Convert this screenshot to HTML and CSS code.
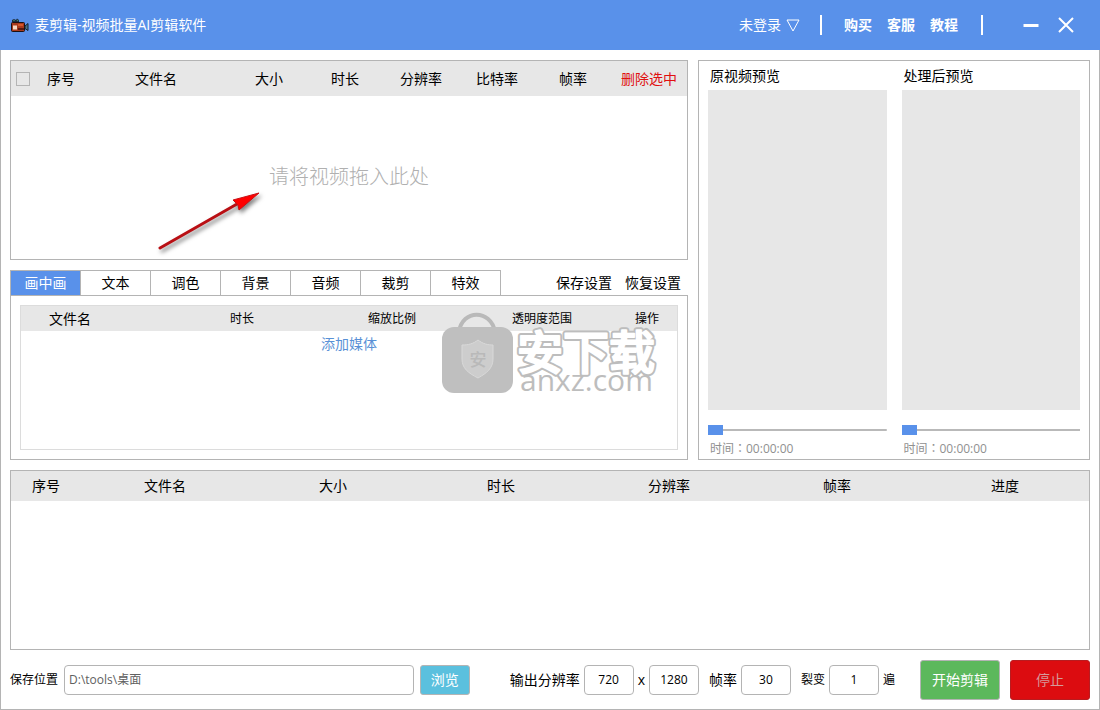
FILE: index.html
```html
<!DOCTYPE html>
<html lang="zh-CN">
<head>
<meta charset="utf-8">
<meta name="viewport" content="width=device-width, initial-scale=1">
<title>麦剪辑-视频批量AI剪辑软件</title>
<link rel="stylesheet" href="styles.css">
</head>
<body>
<div class="window">
  <header class="titlebar">
    <svg class="logo" viewBox="0 0 18 15" aria-hidden="true">
      <path d="M1 4 L1 2 L3 1 L5 2 L6 0.500 L8 2 L8 4z" fill="#1c2a3c"/>
      <circle cx="3" cy="2.500" r="0.800" fill="#3f8a70"/><circle cx="6.500" cy="2.500" r="0.800" fill="#3f8a70"/>
      <rect x="0.500" y="4.500" width="13" height="9" rx="1" fill="#a83a1c" stroke="#1d1010"/>
      <rect x="2" y="7.500" width="4" height="4" fill="#f7d9c4"/>
      <path d="M7 6h5v2H7z" fill="#d4572c"/><path d="M7 10h6v2H7z" fill="#5c1a10"/>
      <path d="M14 8 L17 5.500 V12.500 L14 10.500z" fill="#47758a" stroke="#15222e"/>
    </svg>
    <h1 class="app-name">麦剪辑-视频批量AI剪辑软件</h1>
    <button class="bar-button account" type="button">未登录
      <svg class="caret" viewBox="0 0 14 13" aria-hidden="true"><path d="M1 1 H13 L7 12z"/></svg>
    </button>
    <span class="divider"></span>
    <nav class="bar-links">
      <a href="#buy">购买</a>
      <a href="#service">客服</a>
      <a href="#tutorial">教程</a>
    </nav>
    <span class="divider"></span>
    <div class="window-controls">
      <button class="bar-button" type="button" aria-label="最小化"><svg viewBox="0 0 16 16" aria-hidden="true"><path class="thick" d="M0.500 8.500H15.500"/></svg></button>
      <button class="bar-button" type="button" aria-label="关闭"><svg viewBox="0 0 16 16" aria-hidden="true"><path d="M1 1 L15 15 M15 1 L1 15"/></svg></button>
    </div>
  </header>

  <main class="content">
    <div class="workspace">
      <div class="editor">
        <section class="panel files">
          <table class="grid-table file-table">
            <colgroup><col class="w-30"><col class="w-40"><col class="w-150"><col class="w-76"><col class="w-76"><col class="w-76"><col class="w-76"><col class="w-76"><col class="w-76"></colgroup>
            <thead>
              <tr>
                <th class="check-cell"><input class="check" type="checkbox" aria-label="全选"></th>
                <th>序号</th><th>文件名</th><th>大小</th><th>时长</th><th>分辨率</th><th>比特率</th><th>帧率</th>
                <th><button class="text-button danger" type="button">删除选中</button></th>
              </tr>
            </thead>
          </table>
          <div class="dropzone">
            <p class="drop-hint">请将视频拖入此处</p>
            <svg class="arrow" viewBox="0 0 110 66" aria-hidden="true">
              <path d="M4 59 L81 15" stroke="#b90f14" stroke-width="3" stroke-linecap="round"/>
              <path d="M103 4 L83 21 L82 16 L77 11z" fill="#f00" stroke="#c90f14" stroke-width="1"/>
            </svg>
          </div>
        </section>

        <section class="settings">
          <div class="tab-row">
            <div class="tabs" role="tablist">
              <button class="tab active" type="button" role="tab" aria-selected="true">画中画</button>
              <button class="tab" type="button" role="tab">文本</button>
              <button class="tab" type="button" role="tab">调色</button>
              <button class="tab" type="button" role="tab">背景</button>
              <button class="tab" type="button" role="tab">音频</button>
              <button class="tab" type="button" role="tab">裁剪</button>
              <button class="tab" type="button" role="tab">特效</button>
            </div>
            <div class="tab-actions">
              <button class="text-button" type="button">保存设置</button>
              <button class="text-button" type="button">恢复设置</button>
            </div>
          </div>
          <div class="panel tab-panel" role="tabpanel">
            <div class="media">
              <table class="grid-table media-table">
                <colgroup><col class="w-146"><col class="w-150"><col class="w-150"><col class="w-150"><col class="w-60"></colgroup>
                <thead><tr><th class="name-cell">文件名</th><th>时长</th><th>缩放比例</th><th>透明度范围</th><th>操作</th></tr></thead>
              </table>
              <button class="text-button add-media" type="button">添加媒体</button>
            </div>
            <svg class="watermark" viewBox="0 0 218 96" aria-hidden="true">
              <defs><text id="mark" x="77" y="57" class="mark-cn">安下载</text></defs>
              <path d="M19 20 C22 -3 51 -3 55 20" fill="none" stroke="#b9b9b9" stroke-width="4"/>
              <rect x="2" y="15" width="71" height="66" rx="12" fill="#bfbfbf"/>
              <path d="M38 28 C43 32 48 33 53 33 V47 C53 56 47 61 38 66 C28 61 22 56 22 47 V33 C28 33 33 32 38 28z" fill="#cdcdcd" stroke="#d9d9d9"/>
              <text x="38" y="54" class="mark-badge">安</text>
              <use href="#mark" class="mark-outer"/>
              <use href="#mark" class="mark-inner"/>
              <text x="80" y="79" class="mark-url">anxz.com</text>
            </svg>
          </div>
        </section>
      </div>

      <section class="panel previews">
        <div class="preview">
          <h2 class="preview-title">原视频预览</h2>
          <div class="screen"></div>
          <input class="seek" type="range" min="0" max="100" value="0" aria-label="原视频进度">
          <p class="time" lang="zh-TW">时间：00:00:00</p>
        </div>
        <div class="preview">
          <h2 class="preview-title">处理后预览</h2>
          <div class="screen"></div>
          <input class="seek" type="range" min="0" max="100" value="0" aria-label="处理后进度">
          <p class="time" lang="zh-TW">时间：00:00:00</p>
        </div>
      </section>
    </div>

    <section class="panel tasks">
      <table class="grid-table task-table">
        <colgroup><col class="w-70"><col class="w-168"><col class="w-168"><col class="w-168"><col class="w-168"><col class="w-168"><col class="w-168"></colgroup>
        <thead><tr><th>序号</th><th>文件名</th><th>大小</th><th>时长</th><th>分辨率</th><th>帧率</th><th>进度</th></tr></thead>
      </table>
    </section>

    <form class="footer">
      <div class="path-group">
        <label class="small" for="path">保存位置</label>
        <input class="field path" id="path" type="text" value="D:\tools\桌面">
        <button class="btn browse" type="button">浏览</button>
      </div>
      <div class="options">
        <div class="option">
          <label for="width">输出分辨率</label>
          <input class="field num" id="width" type="text" value="720">
          <label for="height">x</label>
          <input class="field num" id="height" type="text" value="1280">
        </div>
        <div class="option">
          <label for="fps">帧率</label>
          <input class="field num" id="fps" type="text" value="30">
        </div>
        <div class="option">
          <label class="small" for="times">裂变</label>
          <input class="field num" id="times" type="text" value="1">
          <span class="small">遍</span>
        </div>
      </div>
      <div class="actions">
        <button class="btn start" type="button">开始剪辑</button>
        <button class="btn stop" type="button">停止</button>
      </div>
    </form>
  </main>
</div>
</body>
</html>
```

FILE: styles.css
```css
* { box-sizing: border-box; }

body {
  margin: 0;
  background: #fff;
  color: #000;
  font: 14px/20px "Open Sans", "Noto Sans CJK SC", sans-serif;
}

h1, h2, p { margin: 0; font-weight: 400; }

button, input { font: inherit; color: inherit; }

button { padding: 0; border: 0; background: none; cursor: pointer; white-space: nowrap; }

.window { display: flex; flex-direction: column; min-height: 100vh; }

/* Title bar */
.titlebar {
  display: flex;
  align-items: center;
  height: 50px;
  padding: 0 26px 0 11px;
  background: #5991ea;
  color: #fff;
}
.logo { width: 18px; height: 15px; margin-right: 6px; }
.app-name { flex: 1; font-size: 14px; }
.account { display: flex; align-items: center; gap: 5px; }
.caret { width: 14px; height: 13px; fill: none; stroke: #fff; }
.divider { width: 2px; height: 20px; background: #fff; margin: 0 22px 0 20px; }
.bar-links { display: flex; gap: 15px; }
.bar-links a { color: #fff; font-weight: 700; text-decoration: none; }
.bar-links + .divider { margin: 0 40px 0 23px; }
.window-controls { display: flex; gap: 19px; }
.window-controls .bar-button { display: flex; }
.window-controls svg { width: 16px; height: 16px; fill: none; stroke: #fff; stroke-width: 2; }
.window-controls .thick { stroke-width: 3; }

/* Page frame */
.content {
  flex: 1;
  display: flex;
  flex-direction: column;
  gap: 10px;
  padding: 10px 9px 9px;
  border: 1px solid #b4b4b4;
  border-top: 0;
}
.workspace { display: grid; grid-template-columns: minmax(0, 678fr) minmax(0, 392fr); gap: 10px; }
.editor { display: flex; flex-direction: column; gap: 10px; }
.panel { border: 1px solid #b4b4b4; background: #fff; }

/* Tables */
.grid-table { width: 100%; table-layout: fixed; border-collapse: collapse; }
.grid-table th { padding: 0; background: #e7e7e7; font-weight: 400; text-align: center; white-space: nowrap; }
.file-table th { height: 35px; }
.media-table th { height: 25px; font-size: 12px; }
.task-table th { height: 30px; }
.w-30 { width: 30px; }
.w-40 { width: 40px; }
.w-60 { width: 60px; }
.w-70 { width: 70px; }
.w-76 { width: 76px; }
.w-146 { width: 146px; }
.w-150 { width: 150px; }
.w-168 { width: 168px; }
.grid-table .check-cell { padding-left: 5px; text-align: left; }
.media-table .name-cell { padding-left: 28px; font-size: 14px; text-align: left; }
.check {
  display: block;
  appearance: none;
  width: 14px;
  height: 14px;
  margin: 0;
  border: 1px solid #b4b4b4;
}
.check:checked { background: #5991ea; }
.danger { color: #e01010; }

/* Drop area */
.files { display: flex; flex-direction: column; min-height: 200px; }
.dropzone { position: relative; flex: 1; display: grid; place-items: center; padding-bottom: 2px; }
.drop-hint { color: #b0b0b0; font-size: 20px; line-height: 28px; font-weight: 300; }
.arrow {
  position: absolute;
  left: 145px;
  top: 93px;
  width: 110px;
  height: 66px;
  fill: none;
  filter: drop-shadow(2px 3px 2px rgba(0, 0, 0, 0.5));
}

/* Settings tabs */
.tab-row { display: flex; justify-content: space-between; }
.tabs { display: flex; border: 1px solid #b4b4b4; border-width: 1px 0 0 1px; }
.tab { width: 70px; height: 24px; border-right: 1px solid #b4b4b4; }
.tab.active { background: #5991ea; color: #fff; }
.tab-actions { display: flex; gap: 13px; padding-right: 7px; }
.tab-panel { position: relative; display: flex; min-height: 165px; padding: 9px; }
.media { flex: 1; border: 1px solid #dcdcdc; }
.add-media { display: block; margin: 3px auto 0; color: #5991d6; }

/* Watermark */
.watermark {
  position: absolute;
  right: 29px;
  top: 16px;
  width: 218px;
  height: 96px;
  pointer-events: none;
}
.mark-cn { font: 500 46px "Noto Sans CJK SC", sans-serif; }
.mark-outer { fill: #bdbdbd; stroke: #bdbdbd; stroke-width: 6; stroke-linejoin: round; }
.mark-inner { fill: #fff; stroke: #fff; stroke-width: 2; stroke-linejoin: round; }
.mark-badge { font: 500 17px "Noto Sans CJK SC", sans-serif; fill: #b9b9b9; text-anchor: middle; }
.mark-url { font: 500 30px "Open Sans", sans-serif; fill: #bdbdbd; }

/* Previews */
.previews { display: grid; grid-template-columns: 1fr 1fr; gap: 15px; padding: 5px 9px 0; }
.preview { display: flex; flex-direction: column; min-width: 0; }
.preview-title { padding-left: 2px; font-size: 14px; }
.screen { flex: 1; min-height: 300px; margin: 4px 0 15px; background: #e7e7e7; }
.seek {
  appearance: none;
  width: 100%;
  height: 10px;
  margin: 0;
  background: linear-gradient(#b9b9b9, #b9b9b9) center / 100% 2px no-repeat;
}
.seek::-webkit-slider-thumb { appearance: none; width: 15px; height: 10px; background: #5991ea; }
.seek::-moz-range-thumb { width: 15px; height: 10px; border: 0; border-radius: 0; background: #5991ea; }
.time {
  padding: 4px 0 0 2px;
  color: #909090;
  font: 12px/20px "Open Sans", "Noto Sans CJK TC", sans-serif;
}

.tasks { flex: 1; min-height: 180px; }

/* Footer */
.footer { display: flex; align-items: center; }
.path-group, .option, .options, .actions { display: flex; align-items: center; }
.path-group { flex: 1; gap: 6px; }
.options { gap: 10px; margin: 0 25px 0 40px; }
.option { gap: 4px; }
.actions { gap: 10px; }
.small { font-size: 12px; white-space: nowrap; }
.field {
  height: 30px;
  padding: 0 4px 2px;
  border: 1px solid #b4b4b4;
  border-radius: 4px;
  background: #fff;
  font-size: 12px;
}
.path { flex: 1; min-width: 0; color: #606060; }
.num { width: 50px; text-align: center; }
.btn { border: 1px solid #b4b4b4; border-radius: 3px; color: #fff; }
.browse { width: 50px; height: 30px; background: #5bc0de; }
.start, .stop { width: 80px; height: 40px; }
.start { background: #5cb85c; }
.stop { background: #dc0c10; border-color: #b81c20; color: #d59a9a; }
```
